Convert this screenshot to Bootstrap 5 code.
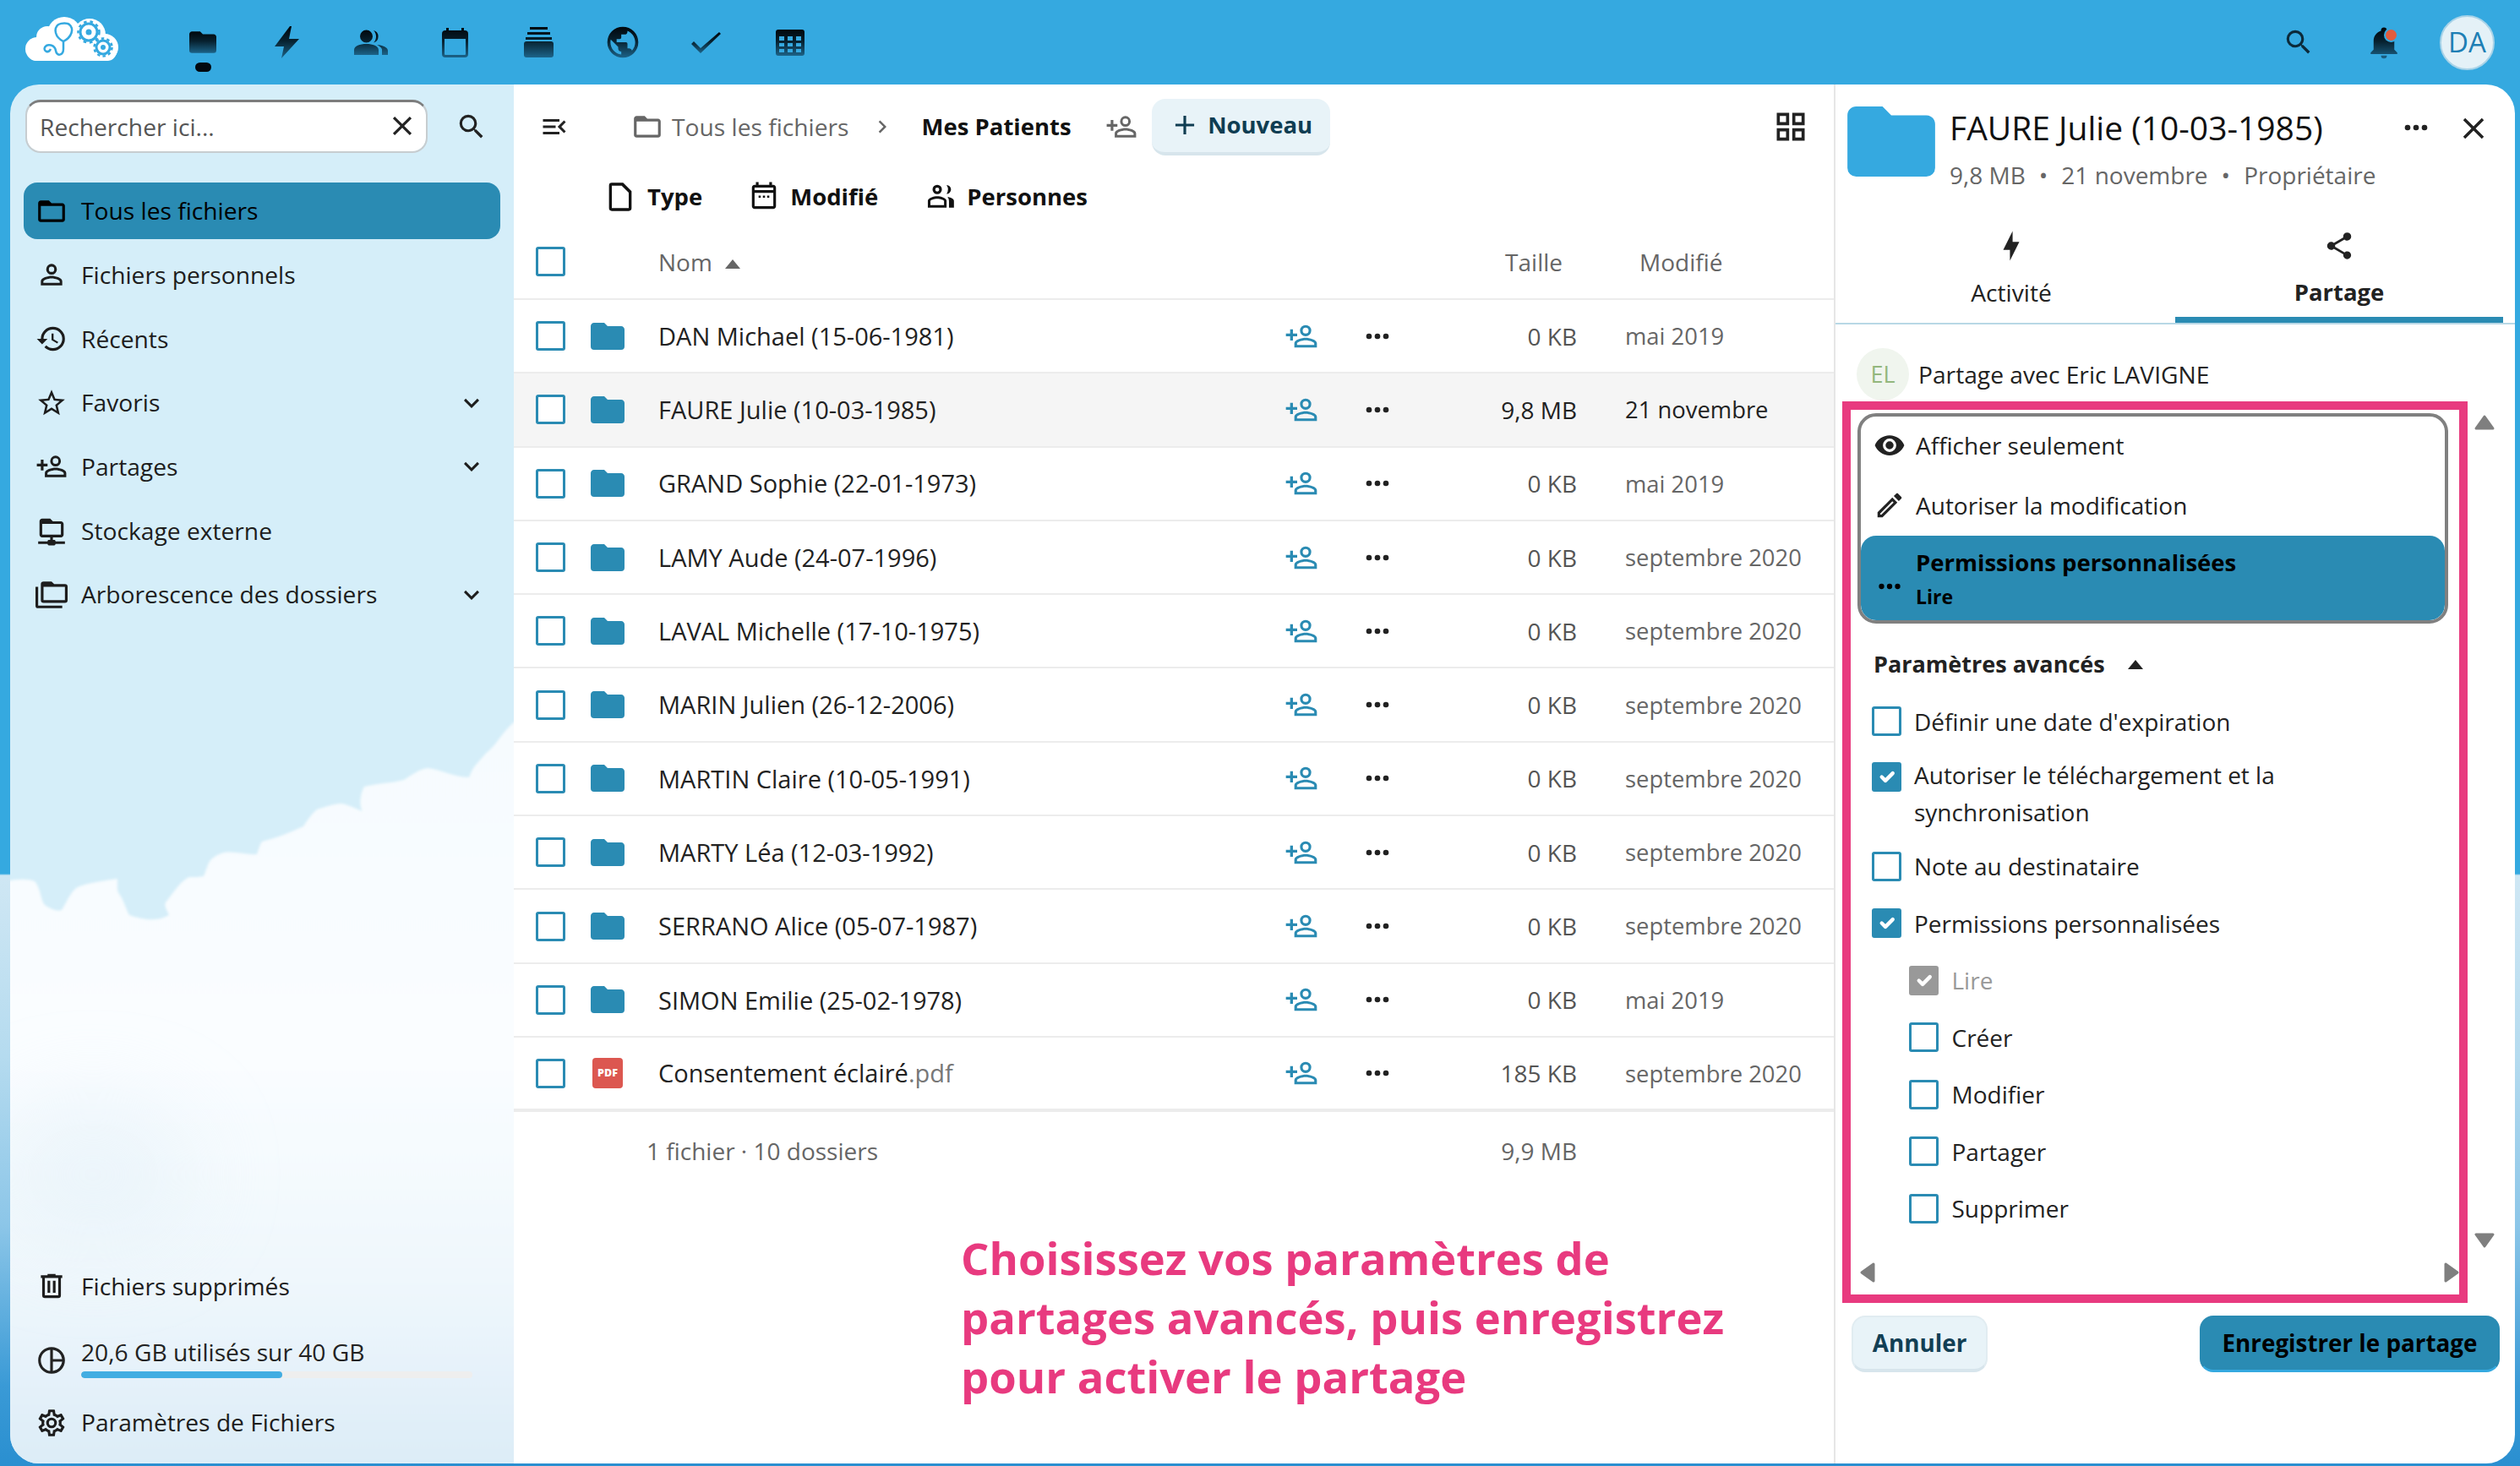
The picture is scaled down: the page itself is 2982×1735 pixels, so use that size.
<!DOCTYPE html>
<html lang="fr">
<head>
  <meta charset="UTF-8">
  <title>Fichiers</title>
  <link href="https://cdn.jsdelivr.net/npm/bootstrap@5.3.2/dist/css/bootstrap.min.css" rel="stylesheet">
  <style>
    :root { --sky: #35a9e0; --teal: #2a8bb3; --ink: #222; --muted: #666; --pink: #e83a7f; }
    html, body { height: 100%; }
    body {
      font-family: "Open Sans", "Noto Sans", sans-serif; font-size: 28.2px; color: var(--ink);
      overflow: hidden;
      background: linear-gradient(to bottom, var(--sky) 0, var(--sky) 1034px, #cfe7f4 1036px, #b5dbef 1250px, #8cc6e8 1450px, #3a9ad6 1640px, #2a8fd0 1735px);
    }
    .ico { width: 38px; height: 38px; fill: currentColor; flex: none; display: block; }
    .page { height: 1735px; }

    /* top bar */
    .topbar { height: 100px; background: var(--sky); padding-left: 30px; padding-right: 30px; }
    .brand { width: 160.5px; }
    .app-tab { width: 99.3px; height: 100px; position: relative; }
    .gr { fill: url(#topgrad); display: block; }
    .app-tab.on::after { content: ""; position: absolute; left: 40px; top: 74px; width: 19px; height: 11px; border-radius: 6px; background: #02090f; }
    .top-right { width: 101px; }
    .bell-dot { position: absolute; left: 53px; top: 6px; width: 13px; height: 13px; border-radius: 50%; background: #e25c3d; box-shadow: 0 0 0 2px var(--sky); }
    .me { width: 65px; height: 65px; margin-left: 16px; border-radius: 50%; background: #e4f1f7; border: 2px solid #a8d3e8; color: #1e7fb5; font-size: 33px; }

    /* left column */
    .side { width: 596px; position: relative; background: #d5eef9; border-radius: 34px 0 0 34px; overflow: hidden; padding: 18px 16px 15px; }
    .side-clouds { position: absolute; left: 0; top: 0; width: 596px; height: 1635px; }
    .side > div { position: relative; }
    .find { width: 476px; height: 63px; margin-left: 2px; }
    .find .form-control {
      height: 63px; border-radius: 18px; font-size: 28.2px; padding: 0 50px 0 15px;
      border: 2px solid #c7cdd0; border-top: 3px solid #7d7d7d; color: #444;
    }
    .find .form-control::placeholder { color: #555; }
    .find .ico { position: absolute; right: 11px; top: 12px; }
    .find-go { margin-left: 33px; }
    .side-link { height: 67px; margin-bottom: 8.7px; border-radius: 16px; padding-left: 14px; color: #1d1d1d; text-decoration: none; gap: 16px; }
    .side-link.on { background: var(--teal); color: #000; }
    .side-link .more { margin-left: auto; margin-right: 16px; width: 36px; height: 36px; }
    .quota { height: 82px; margin-bottom: 4px; padding-left: 14px; gap: 16px; }
    .quota .progress { height: 8px; width: 463px; background: #eee; margin-top: 3px; border-radius: 4px; }
    .quota .progress-bar { background: #42ade2; border-radius: 4px; }
    .quota-text { line-height: 40px; }

    /* file list */
    .files { width: 1562px; background: #fff; position: relative; }
    .bar-one { height: 100px; padding-left: 30px; padding-right: 29px; }
    .crumb { color: #666; }
    .crumb-sep { width: 30px; height: 36px; margin: 0 32px 0 24px; fill: #666; flex: none; }
    .crumb-here { font-weight: 700; font-size: 27.5px; color: #111; }
    .btn-new {
      --bs-btn-bg: #e8f3f8; --bs-btn-hover-bg: #dcecf4; --bs-btn-color: #0f3d52; --bs-btn-hover-color: #0f3d52;
      --bs-btn-border-width: 0; --bs-btn-font-size: 27.5px; --bs-btn-font-weight: 700;
      border-bottom: 4px solid #d7e5ec; border-radius: 16px; height: 67px; width: 211px; padding: 0; flex: none;
    }
    .bar-two { height: 66px; padding-left: 106px; font-weight: 700; font-size: 27.5px; color: #111; }
    .flt { gap: 12px; }
    .files .table { --bs-table-bg: transparent; table-layout: fixed; margin: 0; width: 1562px; color: var(--ink); }
    .files .table > * > * > * { padding: 0; vertical-align: middle; border-bottom: 2.5px solid #ececec; }
    .files thead tr { height: 88px; }
    .files tbody tr { height: 87.3px; }
    .files thead th { font-weight: 400; color: #666; font-size: 28px; }
    .files tbody tr.sel { --bs-table-bg: #f5f5f5; background: #f5f5f5; }
    .files tbody tr:last-child > td { border-bottom: 4px solid #ececec; }
    .files tfoot tr { height: 94px; }
    .files tfoot td { border-bottom: 0 !important; color: #666; font-size: 28px; }
    .c-pick { width: 81px; padding-left: 26px !important; }
    .c-type { width: 90px; padding-left: 10px !important; }
    .c-name { width: 721px; }
    .c-share { width: 80px; }
    .c-more { width: 100px; }
    .c-size { width: 186px; text-align: right; color: #555; font-size: 28px; }
    .c-date { padding-left: 57px !important; color: #666; font-size: 27.4px; }
    .thead-size { padding-right: 17px !important; }
    .thead-date { padding-left: 74px !important; }
    .sel .c-size, .sel .c-date { color: #222; }
    .nom-file { font-size: 29px; }
    .ext { color: #777; }
    .up-tri { display: inline-block; width: 0; height: 0; border: 9.5px solid transparent; border-top: 0; border-bottom: 11px solid currentColor; }
    .folder-thumb { width: 40px; height: 32px; fill: var(--teal); display: block; }
    .pdf-thumb { width: 36px; height: 36px; margin-left: 2px; border-radius: 4px; background: #dc5750; color: #fff; font-size: 12.5px; font-weight: 800; }
    .share-ico { width: 40px; height: 40px; fill: var(--teal); }
    .tip { margin: 46px 0 0 529px; font-size: 52.5px; line-height: 70px; font-weight: 700; color: var(--pink); }

    /* checkboxes */
    .form-check-input[type=checkbox] {
      width: 35px; height: 35px; margin: 0; flex: none; border: 3.5px solid var(--teal); border-radius: 3px; background-color: #fff;
    }
    .form-check-input[type=checkbox]:checked { background-color: var(--teal); border-color: var(--teal); }
    .form-check-input:disabled { opacity: 1; }
    .form-check-input[type=checkbox]:checked:disabled { background-color: #999; border-color: #999; }

    /* details */
    .detail { width: 806px; background: #fff; border-left: 2px solid #e6e6e6; border-radius: 0 34px 34px 0; position: relative; }
    .detail-head { padding: 26px 0 0 14px; height: 160px; }
    .big-folder { width: 104px; height: 83px; fill: var(--sky); flex: none; }
    .detail-title { font-size: 39px; line-height: 50px; color: #111; margin-left: 17px; }
    .detail-sub { line-height: 40px; color: #666; margin-left: 17px; margin-top: 11px; font-size: 28px; }
    .detail-sub i { font-style: normal; margin: 0 16px; }
    .detail-acts { position: absolute; top: 31px; right: 28px; gap: 27px; }
    .tabs-row { height: 124px; border-bottom: 2px solid #b8d8e6; padding-left: 14px; padding-right: 14px; }
    .tab-one { width: 388px; height: 122px; padding-top: 12px; border-bottom: 7px solid transparent; color: #222; text-decoration: none; line-height: 40px; }
    .tab-one.on { border-bottom-color: var(--teal); font-weight: 700; font-size: 27.5px; }
    .tab-one .ico { margin-bottom: 16px; }
    .who { height: 91px; padding-left: 25px; gap: 11px; padding-top: 27px; }
    .who-badge { width: 62px; height: 62px; border-radius: 50%; background: #f0f5ee; color: #93b77d; font-size: 27px; }
    .frame { width: 740px; height: 1067px; margin-left: 8px; border: 10px solid var(--pink); position: relative; padding-top: 4px; }
    .perm-box { width: 699px; margin-left: 8px; border: 4px solid #808080; border-radius: 22px; overflow: hidden; background: #fff; }
    .perm-box .list-group-item { border: 0; padding: 0 0 3px 15px; gap: 12px; height: 71px; background: transparent; color: var(--ink); font-size: 28px; border-radius: 0; }
    .perm-box .list-group-item.active { height: 100px; padding-top: 3px; padding-bottom: 0; background: var(--teal); color: #000; font-weight: 700; font-size: 27.5px; border-radius: 18px; }
    .perm-line { line-height: 41px; }
    .perm-sub { font-size: 23px; line-height: 41px; }
    .adv-head { line-height: 40px; margin: 28px 0 14px 27px; font-weight: 700; font-size: 27px; }
    .adv-head .up-tri { margin-left: 20px; vertical-align: 4px; }
    .opt { height: 67.5px; margin: 0 0 0 24.5px; padding: 0; gap: 15.5px; color: var(--ink); min-height: 0; font-size: 28px; }
    .opt.form-check .form-check-input { margin-left: 0; float: none; }
    .opt.tall { height: 88px; margin-top: 7px; margin-bottom: 9px; align-items: flex-start !important; line-height: 44px; }
    .opt.form-check.tall .form-check-input { margin-top: 7px; }
    .opt.inner { margin-left: 69px; }
    .opt.off { color: #999; opacity: 1; }
    .arrow-ic { position: absolute; fill: #7f7f7f; }
    .arrow-up { width: 24px; height: 18px; left: 756px; top: 391px; }
    .arrow-down { width: 24px; height: 18px; left: 756px; top: 1359px; }
    .arrow-left { width: 18px; height: 24px; left: 11px; bottom: 14px; }
    .arrow-right { width: 18px; height: 24px; right: 0; bottom: 14px; }
    .foot-btns { padding: 15px 18px 0 19px; }
    .foot-btns .btn { height: 67px; border-radius: 16px; font-size: 27.8px; font-weight: 700; padding: 0; }
    .btn-cancel { width: 161px; background: #e8f3f8; color: #123f54; border: 2px solid #e1ecf1; border-bottom: 4px solid #d7e5ec; }
    .btn-save { width: 355px; background: var(--teal); color: #000; border: 2px solid var(--teal); border-bottom: 3px solid #35a9e0; }
  </style>
</head>
<body>

<!-- icones -->
<svg width="0" height="0" class="position-absolute">
  <defs>
    <linearGradient id="topgrad" x1="0" y1="0" x2="0" y2="1">
      <stop offset="0" stop-color="#01070c"/><stop offset=".45" stop-color="#07212f"/><stop offset="1" stop-color="#1c6388"/>
    </linearGradient>
    <linearGradient id="cloudgrad" gradientUnits="userSpaceOnUse" x1="0" y1="853" x2="0" y2="1735">
      <stop offset="0" stop-color="#f6fbfe"/><stop offset=".45" stop-color="#fafdff"/><stop offset=".75" stop-color="#eff7fc"/><stop offset="1" stop-color="#dcecf7"/>
    </linearGradient>
    <filter id="soft" x="-5%" y="-5%" width="110%" height="110%"><feGaussianBlur stdDeviation="1.6"/></filter>
    <filter id="haze" x="-60%" y="-60%" width="220%" height="220%"><feGaussianBlur stdDeviation="50"/></filter>
  </defs>
  <symbol id="i-folder-o" viewBox="0 0 24 24"><path d="M20,18H4V8H20M20,6H12L10,4H4C2.89,4 2,4.89 2,6V18A2,2 0 0,0 4,20H20A2,2 0 0,0 22,18V8C22,6.89 21.1,6 20,6Z"/></symbol>
  <symbol id="i-user" viewBox="0 0 24 24"><path d="M12,4A4,4 0 0,1 16,8A4,4 0 0,1 12,12A4,4 0 0,1 8,8A4,4 0 0,1 12,4M12,6A2,2 0 0,0 10,8A2,2 0 0,0 12,10A2,2 0 0,0 14,8A2,2 0 0,0 12,6M12,13C14.67,13 20,14.33 20,17V20H4V17C4,14.33 9.33,13 12,13M12,14.9C9.03,14.9 5.9,16.36 5.9,17V18.1H18.1V17C18.1,16.36 14.97,14.9 12,14.9Z"/></symbol>
  <symbol id="i-share-user" viewBox="0 0 24 24"><path d="M15,4A4,4 0 0,0 11,8A4,4 0 0,0 15,12A4,4 0 0,0 19,8A4,4 0 0,0 15,4M15,5.9A2.1,2.1 0 0,1 17.1,8A2.1,2.1 0 0,1 15,10.1A2.1,2.1 0 0,1 12.9,8A2.1,2.1 0 0,1 15,5.9M4,7V10H1V12H4V15H6V12H9V10H6V7H4M15,13C12.33,13 7,14.33 7,17V20H23V17C23,14.33 17.67,13 15,13M15,14.9C17.97,14.9 21.1,16.36 21.1,17V18.1H8.9V17C8.9,16.36 12,14.9 15,14.9Z"/></symbol>
  <symbol id="i-search" viewBox="0 0 24 24"><path d="M9.5,3A6.5,6.5 0 0,1 16,9.5C16,11.11 15.41,12.59 14.44,13.73L14.71,14H15.5L20.5,19L19,20.5L14,15.5V14.71L13.73,14.44C12.59,15.41 11.11,16 9.5,16A6.5,6.5 0 0,1 3,9.5A6.5,6.5 0 0,1 9.5,3M9.5,5C7,5 5,7 5,9.5C5,12 7,14 9.5,14C12,14 14,12 14,9.5C14,7 12,5 9.5,5Z"/></symbol>
  <symbol id="i-close" viewBox="0 0 24 24"><path d="M19,6.41L17.59,5L12,10.59L6.41,5L5,6.41L10.59,12L5,17.59L6.41,19L12,13.41L17.59,19L19,17.59L13.41,12L19,6.41Z"/></symbol>
  <symbol id="i-dots" viewBox="0 0 24 24"><path d="M16,12A2,2 0 0,1 18,10A2,2 0 0,1 20,12A2,2 0 0,1 18,14A2,2 0 0,1 16,12M10,12A2,2 0 0,1 12,10A2,2 0 0,1 14,12A2,2 0 0,1 12,14A2,2 0 0,1 10,12M4,12A2,2 0 0,1 6,10A2,2 0 0,1 8,12A2,2 0 0,1 6,14A2,2 0 0,1 4,12Z"/></symbol>
  <symbol id="i-down" viewBox="0 0 24 24"><path d="M7.41,8.58L12,13.17L16.59,8.58L18,10L12,16L6,10L7.41,8.58Z"/></symbol>
  <symbol id="i-right" viewBox="0 0 24 24"><path d="M8.59,16.58L13.17,12L8.59,7.41L10,6L16,12L10,18L8.59,16.58Z"/></symbol>
  <symbol id="i-plus" viewBox="0 0 24 24"><path d="M19,13H13V19H11V13H5V11H11V5H13V11H19V13Z"/></symbol>
  <symbol id="i-history" viewBox="0 0 24 24"><path d="M13.5,8H12V13L16.28,15.54L17,14.33L13.5,12.25V8M13,3A9,9 0 0,0 4,12H1L4.96,16.03L9,12H6A7,7 0 0,1 13,5A7,7 0 0,1 20,12A7,7 0 0,1 13,19C11.07,19 9.32,18.21 8.06,16.94L6.64,18.36C8.27,20 10.5,21 13,21A9,9 0 0,0 22,12A9,9 0 0,0 13,3"/></symbol>
  <symbol id="i-star" viewBox="0 0 24 24"><path d="M12,15.39L8.24,17.66L9.23,13.38L5.91,10.5L10.29,10.13L12,6.09L13.71,10.13L18.09,10.5L14.77,13.38L15.76,17.66M22,9.24L14.81,8.63L12,2L9.19,8.63L2,9.24L7.45,13.97L5.82,21L12,17.27L18.18,21L16.54,13.97L22,9.24Z"/></symbol>
  <symbol id="i-network" viewBox="0 0 24 24"><path d="M15 20C15 19.45 14.55 19 14 19H13V17H19C20.11 17 21 16.11 21 15V7C21 5.89 20.11 5 19 5H13L11 3H5C3.89 3 3 3.89 3 5V15C3 16.11 3.89 17 5 17H11V19H10C9.45 19 9 19.45 9 20H2V22H9C9 22.55 9.45 23 10 23H14C14.55 23 15 22.55 15 22H22V20H15M5 15V7H19V15H5Z"/></symbol>
  <symbol id="i-tree" viewBox="0 0 24 24"><path d="M22,4H14L12,2H6A2,2 0 0,0 4,4V16A2,2 0 0,0 6,18H22A2,2 0 0,0 24,16V6A2,2 0 0,0 22,4M22,16H6V6H22V16M2,6H0V20A2,2 0 0,0 2,22H20V20H2V6Z"/></symbol>
  <symbol id="i-trash" viewBox="0 0 24 24"><path d="M9,3V4H4V6H5V19A2,2 0 0,0 7,21H17A2,2 0 0,0 19,19V6H20V4H15V3H9M7,6H17V19H7V6M9,8V17H11V8H9M13,8V17H15V8H13Z"/></symbol>
  <symbol id="i-pie" viewBox="0 0 24 24"><path d="M12,2A10,10 0 1,0 22,12A10,10 0 0,0 12,2M11,4.06V19.94A8,8 0 0,1 11,4.06M13,19.94V13H19.94A8,8 0 0,1 13,19.94M13,11V4.06A8,8 0 0,1 19.94,11H13Z"/></symbol>
  <symbol id="i-cog" viewBox="0 0 24 24"><path d="M12,8A4,4 0 0,1 16,12A4,4 0 0,1 12,16A4,4 0 0,1 8,12A4,4 0 0,1 12,8M12,10A2,2 0 0,0 10,12A2,2 0 0,0 12,14A2,2 0 0,0 14,12A2,2 0 0,0 12,10M10,22C9.75,22 9.54,21.82 9.5,21.58L9.13,18.93C8.5,18.68 7.96,18.34 7.44,17.94L4.95,18.95C4.73,19.03 4.46,18.95 4.34,18.73L2.34,15.27C2.21,15.05 2.27,14.78 2.46,14.63L4.57,12.97L4.5,12L4.57,11L2.46,9.37C2.27,9.22 2.21,8.95 2.34,8.73L4.34,5.27C4.46,5.05 4.73,4.96 4.95,5.05L7.44,6.05C7.96,5.66 8.5,5.32 9.13,5.07L9.5,2.42C9.54,2.18 9.75,2 10,2H14C14.25,2 14.46,2.18 14.5,2.42L14.87,5.07C15.5,5.32 16.04,5.66 16.56,6.05L19.05,5.05C19.27,4.96 19.54,5.05 19.66,5.27L21.66,8.73C21.79,8.95 21.73,9.22 21.54,9.37L19.43,11L19.5,12L19.43,13L21.54,14.63C21.73,14.78 21.79,15.05 21.66,15.27L19.66,18.73C19.54,18.95 19.27,19.04 19.05,18.95L16.56,17.95C16.04,18.34 15.5,18.68 14.87,18.93L14.5,21.58C14.46,21.82 14.25,22 14,22H10M11.25,4L10.88,6.61C9.68,6.86 8.62,7.5 7.85,8.39L5.44,7.35L4.69,8.65L6.8,10.2C6.4,11.37 6.4,12.64 6.8,13.8L4.68,15.36L5.43,16.66L7.86,15.62C8.63,16.5 9.68,17.14 10.87,17.38L11.24,20H12.76L13.13,17.39C14.32,17.14 15.37,16.5 16.14,15.62L18.57,16.66L19.32,15.36L17.2,13.81C17.6,12.64 17.6,11.37 17.2,10.2L19.31,8.65L18.56,7.35L16.15,8.39C15.38,7.5 14.32,6.86 13.12,6.62L12.75,4H11.25Z"/></symbol>
  <symbol id="i-menu-open" viewBox="0 0 24 24"><path d="M21,15.61L19.59,17L14.58,12L19.59,7L21,8.39L17.44,12L21,15.61M3,6H16V8H3V6M3,13V11H13V13H3M3,18V16H16V18H3Z"/></symbol>
  <symbol id="i-grid" viewBox="0 0 24 24"><path d="M3 11H11V3H3M5 5H9V9H5M13 21H21V13H13M15 15H19V19H15M3 21H11V13H3M5 15H9V19H5M13 3V11H21V3M19 9H15V5H19Z"/></symbol>
  <symbol id="i-file" viewBox="0 0 24 24"><path d="M14,2H6A2,2 0 0,0 4,4V20A2,2 0 0,0 6,22H18A2,2 0 0,0 20,20V8L14,2M18,20H6V4H13L18,9V20Z"/></symbol>
  <symbol id="i-cal" viewBox="0 0 24 24"><path d="M19 3H18V1H16V3H8V1H6V3H5C3.89 3 3 3.9 3 5V19C3 20.1 3.89 21 5 21H19C20.1 21 21 20.1 21 19V5C21 3.9 20.1 3 19 3M19 19H5V9H19V19M19 7H5V5H19V7M8 11H9.6V12.6H8ZM11.2 11H12.8V12.6H11.2ZM14.4 11H16V12.6H14.4Z"/></symbol>
  <symbol id="i-people" viewBox="0 0 24 24"><path d="M9.5,3A3.5,3.5 0 1,1 9.5,10A3.5,3.5 0 0,1 9.5,3M9.5,5A1.5,1.5 0 1,0 9.5,8A1.5,1.5 0 0,0 9.5,5M9.5,11.5C12,11.5 16.5,12.7 16.5,15V20H2.5V15C2.5,12.7 7,11.5 9.5,11.5M9.5,13.4C7.2,13.4 4.4,14.4 4.4,15V18.1H14.6V15C14.6,14.4 11.8,13.4 9.5,13.4M16.5,3.2A3.3,3.3 0 0,1 16.5,9.8A6,6 0 0,0 16.5,3.2M17.2,12C19.6,12.4 22,13.4 22,15V20H18.3V15.5C18.3,14.2 18,13 17.2,12Z"/></symbol>
  <symbol id="i-bolt" viewBox="0 0 24 24"><path d="M11 15H6L13 1V9H18L11 23V15Z"/></symbol>
  <symbol id="i-share" viewBox="0 0 24 24"><path d="M18,16.08C17.24,16.08 16.56,16.38 16.04,16.85L8.91,12.7C8.96,12.47 9,12.24 9,12C9,11.76 8.96,11.53 8.91,11.3L15.96,7.19C16.5,7.69 17.21,8 18,8A3,3 0 0,0 21,5A3,3 0 0,0 18,2A3,3 0 0,0 15,5C15,5.24 15.04,5.47 15.09,5.7L8.04,9.81C7.5,9.31 6.79,9 6,9A3,3 0 0,0 3,12A3,3 0 0,0 6,15C6.79,15 7.5,14.69 8.04,14.19L15.16,18.34C15.11,18.55 15.08,18.77 15.08,19C15.08,20.61 16.39,21.92 18,21.92C19.61,21.92 20.92,20.61 20.92,19A2.92,2.92 0 0,0 18,16.08Z"/></symbol>
  <symbol id="i-eye" viewBox="0 0 24 24"><path d="M12,9A3,3 0 0,0 9,12A3,3 0 0,0 12,15A3,3 0 0,0 15,12A3,3 0 0,0 12,9M12,17A5,5 0 0,1 7,12A5,5 0 0,1 12,7A5,5 0 0,1 17,12A5,5 0 0,1 12,17M12,4.5C7,4.5 2.73,7.61 1,12C2.73,16.39 7,19.5 12,19.5C17,19.5 21.27,16.39 23,12C21.27,7.61 17,4.5 12,4.5Z"/></symbol>
  <symbol id="i-pencil" viewBox="0 0 24 24"><path d="M14.06,9L15,9.94L5.92,19H5V18.08L14.06,9M17.66,3C17.41,3 17.15,3.1 16.96,3.29L15.13,5.12L18.88,8.87L20.71,7.04C21.1,6.65 21.1,6 20.71,5.63L18.37,3.29C18.17,3.09 17.92,3 17.66,3M14.06,6.19L3,17.25V21H6.75L17.81,9.94L14.06,6.19Z"/></symbol>
</svg>

<div class="page d-flex flex-column">

  <header class="topbar d-flex align-items-center">
    <a class="brand d-block" href="#">
      <svg width="110" height="64" viewBox="10 8 110 64" aria-label="Logo">
        <g fill="#fff">
          <circle cx="24" cy="48" r="14"/><circle cx="36" cy="34" r="13"/><circle cx="56" cy="30" r="20"/>
          <circle cx="86" cy="31" r="19"/><circle cx="104" cy="46" r="16"/><rect x="12" y="40" width="106" height="22" rx="11"/>
        </g>
        <g fill="none" stroke="#35a9e0">
          <path d="M49 19C43 24 45 34 55 39C65 34 68 24 62 19C60 17 53 17 49 19" stroke-width="2.5"/>
          <path d="M55 39V48C55 56 47 57 46 50C45 43 36 41 33 46C31 50 37 54 40 48" stroke-width="2.5"/>
          <circle cx="85" cy="28" r="10" stroke-width="3"/><circle cx="85" cy="28" r="12.5" stroke-width="2.5" stroke-dasharray="3.5 4"/>
          <circle cx="102" cy="46" r="8" stroke-width="3"/><circle cx="102" cy="46" r="10.5" stroke-width="2.5" stroke-dasharray="3.5 3.2"/>
        </g>
        <circle cx="85" cy="28" r="3.5" fill="#35a9e0"/><circle cx="102" cy="46" r="3" fill="#35a9e0"/>
      </svg>
    </a>
    <a class="app-tab on d-flex align-items-center justify-content-center" href="#"><svg class="gr" width="32" height="26" viewBox="2 4 20 16"><path d="M10,4H4C2.89,4 2,4.89 2,6V18A2,2 0 0,0 4,20H20A2,2 0 0,0 22,18V8C22,6.89 21.1,6 20,6H12L10,4Z"/></svg></a>
    <a class="app-tab d-flex align-items-center justify-content-center" href="#"><svg class="gr" width="29" height="38" viewBox="0 0 29 38"><path d="M18 0L0 24H11L8 38L29 15H17L20 0Z"/></svg></a>
    <a class="app-tab d-flex align-items-center justify-content-center" href="#"><svg class="gr" width="40" height="30" viewBox="0 0 40 30"><path d="M14.5 .5A7.5 7.5 0 1 1 14.5 15.5A7.5 7.5 0 0 1 14.5 .5M0 30V24C0 19.5 7 17 14.5 17C22 17 29 19.5 29 24V30ZM23 1A7.5 7.5 0 0 1 23 15.5C25 13.5 26 11 26 8.2C26 5.5 25 3 23 1M27 18C34 18.5 40 21 40 25V30H33V24C33 21.5 30 19.5 27 18Z"/></svg></a>
    <a class="app-tab d-flex align-items-center justify-content-center" href="#"><svg class="gr" width="31" height="35" viewBox="0 0 31 35"><path fill-rule="evenodd" d="M5 0H8V3H23V0H26V3H27A4 4 0 0 1 31 7V31A4 4 0 0 1 27 35H4A4 4 0 0 1 0 31V7A4 4 0 0 1 4 3H5ZM3 13V31A1 1 0 0 0 4 32H27A1 1 0 0 0 28 31V13Z"/></svg></a>
    <a class="app-tab d-flex align-items-center justify-content-center" href="#"><svg class="gr" width="35" height="36" viewBox="0 0 35 36"><path d="M7 0H28V3H7ZM4 6H31V9H4ZM2 12H33V15H2ZM3 17H32A3 3 0 0 1 35 20V33A3 3 0 0 1 32 36H3A3 3 0 0 1 0 33V20A3 3 0 0 1 3 17Z"/></svg></a>
    <a class="app-tab d-flex align-items-center justify-content-center" href="#"><svg class="gr" width="44" height="44" viewBox="0 0 24 24"><path d="M17.9,17.39C17.64,16.59 16.89,16 16,16H15V13A1,1 0 0,0 14,12H8V10H10A1,1 0 0,0 11,9V7H13A2,2 0 0,0 15,5V4.59C17.93,5.77 20,8.64 20,12C20,14.08 19.2,15.97 17.9,17.39M11,19.93C7.05,19.44 4,16.08 4,12C4,11.38 4.08,10.78 4.21,10.21L9,15V16A2,2 0 0,0 11,18M12,2A10,10 0 0,0 2,12A10,10 0 0,0 12,22A10,10 0 0,0 22,12A10,10 0 0,0 12,2Z"/></svg></a>
    <a class="app-tab d-flex align-items-center justify-content-center" href="#"><svg class="gr" width="35" height="25" viewBox="0 0 35 25"><path d="M0 14L3 11L11 19L33 0L35 2L11 25Z"/></svg></a>
    <a class="app-tab d-flex align-items-center justify-content-center" href="#"><svg class="gr" width="34" height="31" viewBox="0 0 34 31"><path fill-rule="evenodd" d="M3 0H31A3 3 0 0 1 34 3V28A3 3 0 0 1 31 31H3A3 3 0 0 1 0 28V3A3 3 0 0 1 3 0ZM4 8V13H10V8ZM14 8V13H20V8ZM24 8V13H30V8ZM4 16V20H10V16ZM14 16V20H20V16ZM24 16V20H30V16ZM4 23V27H10V23ZM14 23V27H20V23ZM24 23V27H30V23Z"/></svg></a>
    <div class="top-right ms-auto d-flex justify-content-center"><svg class="ico" style="color:#0c2a3a"><use href="#i-search"/></svg></div>
    <div class="top-right d-flex justify-content-center position-relative">
      <svg class="gr" width="42" height="42" viewBox="0 0 24 24"><path d="M21,19V20H3V19L5,17V11C5,7.9 7.03,5.17 10,4.29C10,4.19 10,4.1 10,4A2,2 0 0,1 12,2A2,2 0 0,1 14,4C14,4.1 14,4.19 14,4.29C16.97,5.17 19,7.9 19,11V17L21,19M14,21A2,2 0 0,1 12,23A2,2 0 0,1 10,21"/></svg>
      <span class="bell-dot"></span>
    </div>
    <div class="me d-flex align-items-center justify-content-center">DA</div>
  </header>

  <div class="d-flex flex-grow-1" style="padding: 0 6px 3px 12px; min-height:0">

    <aside class="side d-flex flex-column">
      <svg class="side-clouds" viewBox="12 100 596 1635" preserveAspectRatio="none">
        <path filter="url(#soft)" fill="url(#cloudgrad)" d="M8 1043C20 1040 34 1040 41 1043C48 1050 48 1066 53 1071C60 1076 68 1079 73 1077C80 1066 85 1052 94 1049C108 1044 125 1042 139 1040C139 1048 138 1054 141 1058C146 1064 149 1076 153 1083C162 1086 172 1089 182 1088C188 1088 195 1086 200 1083C197 1076 194 1072 196 1068C204 1058 214 1042 224 1038C230 1038 236 1038 241 1037C244 1030 245 1024 249 1018C254 1013 260 1010 265 1009C278 1007 292 1012 304 1011C306 1006 307 1000 310 996C326 992 344 985 359 978C364 970 369 963 375 958C385 955 395 951 404 951C412 952 420 957 429 960C424 952 427 938 431 931C446 927 462 927 478 923C487 917 497 910 506 909C522 911 538 920 555 920C558 913 560 908 565 903C570 897 574 892 580 887C590 878 598 860 615 850V1745H8Z"/>
        <ellipse cx="110" cy="1390" rx="120" ry="90" fill="#e3f0f8" opacity=".5" filter="url(#haze)"/>
      </svg>
      <div class="d-flex align-items-center">
        <div class="find position-relative">
          <input class="form-control" type="text" placeholder="Rechercher ici..." aria-label="Rechercher">
          <svg class="ico"><use href="#i-close"/></svg>
        </div>
        <svg class="ico find-go"><use href="#i-search"/></svg>
      </div>
      <div style="margin-top:35px" id="side-top"></div>
      <div class="mt-auto">
        <a class="side-link d-flex align-items-center" href="#"><svg class="ico"><use href="#i-trash"/></svg>Fichiers supprimés</a>
        <div class="quota d-flex align-items-center">
          <svg class="ico" style="margin-top:10px"><use href="#i-pie"/></svg>
          <div>
            <div class="quota-text">20,6 GB utilisés sur 40 GB</div>
            <div class="progress"><div class="progress-bar" style="width:51.5%"></div></div>
          </div>
        </div>
        <a class="side-link d-flex align-items-center mb-0" href="#"><svg class="ico"><use href="#i-cog"/></svg>Paramètres de Fichiers</a>
      </div>
    </aside>

    <main class="files">
      <div class="bar-one d-flex align-items-center">
        <svg class="ico" style="width:36px;height:36px"><use href="#i-menu-open"/></svg>
        <svg class="ico" style="margin-left:73px;margin-right:10px;color:#666"><use href="#i-folder-o"/></svg>
        <span class="crumb">Tous les fichiers</span>
        <svg class="crumb-sep"><use href="#i-right"/></svg>
        <span class="crumb-here">Mes Patients</span>
        <svg class="ico" style="color:#666;margin-left:40px;margin-right:17px"><use href="#i-share-user"/></svg>
        <button class="btn btn-new d-flex align-items-center justify-content-center gap-2"><svg class="ico"><use href="#i-plus"/></svg>Nouveau</button>
        <svg class="ico ms-auto" style="width:44px;height:44px"><use href="#i-grid"/></svg>
      </div>
      <div class="bar-two d-flex align-items-center">
        <div class="flt d-flex align-items-center"><svg class="ico" style="width:40px;height:40px"><use href="#i-file"/></svg>Type</div>
        <div class="flt d-flex align-items-center" style="margin-left:54px"><svg class="ico"><use href="#i-cal"/></svg>Modifié</div>
        <div class="flt d-flex align-items-center" style="margin-left:55px"><svg class="ico"><use href="#i-people"/></svg>Personnes</div>
      </div>
      <table class="table">
        <thead>
          <tr>
            <th class="c-pick"><input class="form-check-input d-block" type="checkbox" aria-label="Tout"></th>
            <th class="c-type"></th>
            <th class="c-name">Nom <span class="up-tri ms-2" style="vertical-align:3px"></span></th>
            <th class="c-share"></th>
            <th class="c-more"></th>
            <th class="c-size thead-size">Taille</th>
            <th class="thead-date">Modifié</th>
          </tr>
        </thead>
        <tbody id="file-rows"></tbody>
        <tfoot>
          <tr>
            <td colspan="5" style="padding-left:157px">1 fichier · 10 dossiers</td>
            <td class="c-size" style="color:#666">9,9 MB</td>
            <td></td>
          </tr>
        </tfoot>
      </table>
      <div class="tip">Choisissez vos paramètres de<br>partages avancés, puis enregistrez<br>pour activer le partage</div>
    </main>

    <section class="detail flex-grow-1">
      <div class="detail-head d-flex">
        <svg class="big-folder" viewBox="2 4 20 16"><path d="M10,4H4C2.89,4 2,4.89 2,6V18A2,2 0 0,0 4,20H20A2,2 0 0,0 22,18V8C22,6.89 21.1,6 20,6H12L10,4Z"/></svg>
        <div>
          <div class="detail-title">FAURE Julie (10-03-1985)</div>
          <div class="detail-sub">9,8 MB<i>•</i>21 novembre<i>•</i>Propriétaire</div>
        </div>
        <div class="detail-acts d-flex">
          <svg class="ico" style="width:40px;height:40px"><use href="#i-dots"/></svg>
          <svg class="ico" style="width:42px;height:42px"><use href="#i-close"/></svg>
        </div>
      </div>
      <div class="tabs-row d-flex">
        <a class="tab-one d-flex flex-column align-items-center" href="#"><svg class="ico"><use href="#i-bolt"/></svg>Activité</a>
        <a class="tab-one on d-flex flex-column align-items-center" href="#"><svg class="ico"><use href="#i-share"/></svg>Partage</a>
      </div>
      <div class="who d-flex align-items-center">
        <span class="who-badge d-flex align-items-center justify-content-center">EL</span>
        <span>Partage avec Eric LAVIGNE</span>
      </div>

      <div class="frame">
        <div class="perm-box list-group">
          <div class="list-group-item d-flex align-items-center"><svg class="ico"><use href="#i-eye"/></svg>Afficher seulement</div>
          <div class="list-group-item d-flex align-items-center"><svg class="ico"><use href="#i-pencil"/></svg>Autoriser la modification</div>
          <div class="list-group-item active d-flex align-items-center">
            <svg class="ico" style="margin-top:16px"><use href="#i-dots"/></svg>
            <div>
              <div class="perm-line">Permissions personnalisées</div>
              <div class="perm-sub">Lire</div>
            </div>
          </div>
        </div>
        <div class="adv-head">Paramètres avancés <span class="up-tri"></span></div>
        <label class="opt form-check d-flex align-items-center"><input class="form-check-input" type="checkbox">Définir une date d'expiration</label>
        <label class="opt tall form-check d-flex"><input class="form-check-input" type="checkbox" checked><span>Autoriser le téléchargement et la<br>synchronisation</span></label>
        <label class="opt form-check d-flex align-items-center"><input class="form-check-input" type="checkbox">Note au destinataire</label>
        <label class="opt form-check d-flex align-items-center"><input class="form-check-input" type="checkbox" checked>Permissions personnalisées</label>
        <label class="opt inner off form-check d-flex align-items-center"><input class="form-check-input" type="checkbox" checked disabled>Lire</label>
        <label class="opt inner form-check d-flex align-items-center"><input class="form-check-input" type="checkbox">Créer</label>
        <label class="opt inner form-check d-flex align-items-center"><input class="form-check-input" type="checkbox">Modifier</label>
        <label class="opt inner form-check d-flex align-items-center"><input class="form-check-input" type="checkbox">Partager</label>
        <label class="opt inner form-check d-flex align-items-center"><input class="form-check-input" type="checkbox">Supprimer</label>
        <svg class="arrow-ic arrow-left" viewBox="0 0 18 24"><path d="M16 2V22L2 12Z" stroke="#7f7f7f" stroke-width="3" stroke-linejoin="round"/></svg>
        <svg class="arrow-ic arrow-right" viewBox="0 0 18 24"><path d="M2 2V22L16 12Z" stroke="#7f7f7f" stroke-width="3" stroke-linejoin="round"/></svg>
      </div>
      <svg class="arrow-ic arrow-up" viewBox="0 0 24 18"><path d="M2 16H22L12 2Z" stroke="#7f7f7f" stroke-width="3" stroke-linejoin="round"/></svg>
      <svg class="arrow-ic arrow-down" viewBox="0 0 24 18"><path d="M2 2H22L12 16Z" stroke="#7f7f7f" stroke-width="3" stroke-linejoin="round"/></svg>

      <div class="foot-btns d-flex justify-content-between">
        <button class="btn btn-cancel">Annuler</button>
        <button class="btn btn-save">Enregistrer le partage</button>
      </div>
    </section>
  </div>
</div>

<script>
  const sideLinks = [
    { ico: "i-folder-o", label: "Tous les fichiers", on: true },
    { ico: "i-user", label: "Fichiers personnels" },
    { ico: "i-history", label: "Récents" },
    { ico: "i-star", label: "Favoris", more: true },
    { ico: "i-share-user", label: "Partages", more: true },
    { ico: "i-network", label: "Stockage externe" },
    { ico: "i-tree", label: "Arborescence des dossiers", more: true }
  ];
  document.getElementById("side-top").innerHTML = sideLinks.map(l => `
    <a class="side-link d-flex align-items-center ${l.on ? "on" : ""}" href="#">
      <svg class="ico"><use href="#${l.ico}"/></svg>${l.label}
      ${l.more ? '<svg class="ico more"><use href="#i-down"/></svg>' : ""}
    </a>`).join("");

  const fichiers = [
    ["DAN Michael (15-06-1981)", "0 KB", "mai 2019"],
    ["FAURE Julie (10-03-1985)", "9,8 MB", "21 novembre"],
    ["GRAND Sophie (22-01-1973)", "0 KB", "mai 2019"],
    ["LAMY Aude (24-07-1996)", "0 KB", "septembre 2020"],
    ["LAVAL Michelle (17-10-1975)", "0 KB", "septembre 2020"],
    ["MARIN Julien (26-12-2006)", "0 KB", "septembre 2020"],
    ["MARTIN Claire (10-05-1991)", "0 KB", "septembre 2020"],
    ["MARTY Léa (12-03-1992)", "0 KB", "septembre 2020"],
    ["SERRANO Alice (05-07-1987)", "0 KB", "septembre 2020"],
    ["SIMON Emilie (25-02-1978)", "0 KB", "mai 2019"],
    ["Consentement éclairé|.pdf", "185 KB", "septembre 2020"]
  ];
  document.getElementById("file-rows").innerHTML = fichiers.map(([nom, taille, date]) => {
    const [base, ext] = nom.split("|");
    const vignette = ext
      ? '<span class="pdf-thumb d-flex align-items-center justify-content-center">PDF</span>'
      : '<svg class="folder-thumb" viewBox="2 4 20 16"><path d="M10,4H4C2.89,4 2,4.89 2,6V18A2,2 0 0,0 4,20H20A2,2 0 0,0 22,18V8C22,6.89 21.1,6 20,6H12L10,4Z"/></svg>';
    return `
    <tr class="${nom.startsWith("FAURE") ? "sel" : ""}">
      <td class="c-pick"><input class="form-check-input d-block" type="checkbox" aria-label="Choisir"></td>
      <td class="c-type">${vignette}</td>
      <td class="nom-file">${base}${ext ? `<span class="ext">${ext}</span>` : ""}</td>
      <td><svg class="share-ico d-block mx-auto"><use href="#i-share-user"/></svg></td>
      <td><svg class="ico mx-auto" style="width:40px;height:40px"><use href="#i-dots"/></svg></td>
      <td class="c-size">${taille}</td>
      <td class="c-date">${date}</td>
    </tr>`;
  }).join("");
</script>
</body>
</html>
